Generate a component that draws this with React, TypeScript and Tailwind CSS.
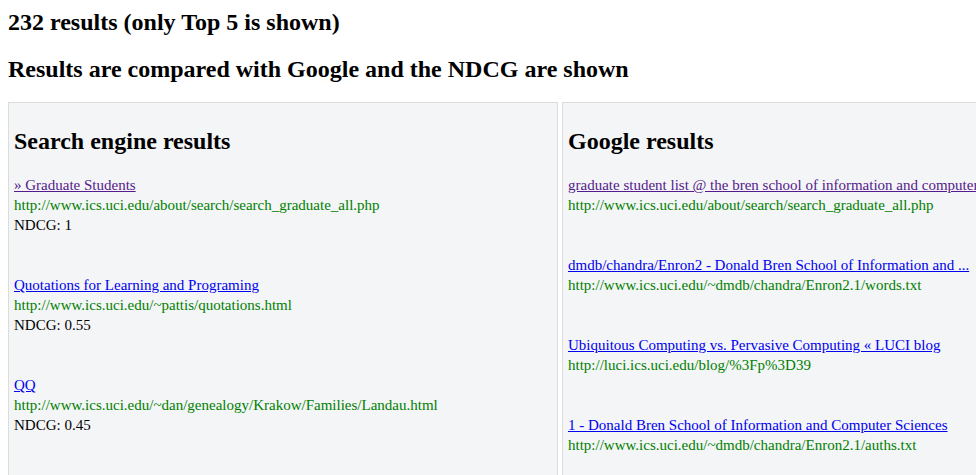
import React from 'react';

type Result = { title: string; href: string; url: string; ndcg?: string; visited?: boolean };

const ours: Result[] = [
  { title: '» Graduate Students', href: '#a', url: 'http://www.ics.uci.edu/about/search/search_graduate_all.php', ndcg: '1', visited: true },
  { title: 'Quotations for Learning and Programing', href: '#b', url: 'http://www.ics.uci.edu/~pattis/quotations.html', ndcg: '0.55' },
  { title: 'QQ', href: '#c', url: 'http://www.ics.uci.edu/~dan/genealogy/Krakow/Families/Landau.html', ndcg: '0.45' },
];

const google: Result[] = [
  { title: 'graduate student list @ the bren school of information and computer sciences', href: '#d', url: 'http://www.ics.uci.edu/about/search/search_graduate_all.php', visited: true },
  { title: 'dmdb/chandra/Enron2 - Donald Bren School of Information and ...', href: '#e', url: 'http://www.ics.uci.edu/~dmdb/chandra/Enron2.1/words.txt' },
  { title: 'Ubiquitous Computing vs. Pervasive Computing « LUCI blog', href: '#f', url: 'http://luci.ics.uci.edu/blog/%3Fp%3D39' },
  { title: '1 - Donald Bren School of Information and Computer Sciences', href: '#g', url: 'http://www.ics.uci.edu/~dmdb/chandra/Enron2.1/auths.txt' },
];

const Panel: React.FC<{ title: string; items: Result[] }> = ({ title, items }) => (
  <div className="w-[550px] shrink-0 overflow-hidden border border-[#dcdcdc] bg-[#f4f5f7] px-[5px] pb-4">
    <h3 className="mt-[24px] mb-[20px] text-[24px] font-bold leading-[28px]">{title}</h3>
    {items.map((r) => (
      <div key={r.href} className="mb-[40px] text-[15px] leading-[20px]">
        <a
          href={r.href}
          className={`block whitespace-nowrap underline ${r.visited ? 'text-[#551a8b]' : 'text-[#0000ee]'}`}
        >
          {r.title}
        </a>
        <div className="whitespace-nowrap text-[#008000]">{r.url}</div>
        {r.ndcg && <div>NDCG: {r.ndcg}</div>}
      </div>
    ))}
  </div>
);

export default function App() {
  return (
    <div className="h-[475px] overflow-hidden bg-white p-2 text-black" style={{ fontFamily: '"Liberation Serif", "Times New Roman", serif' }}>
      <h2 className="text-[24px] font-bold leading-[28px]">232 results (only Top 5 is shown)</h2>
      <h2 className="mt-[19px] text-[24px] font-bold leading-[28px]">Results are compared with Google and the NDCG are shown</h2>
      <div className="mt-[19px] flex gap-[4px]">
        <Panel title="Search engine results" items={ours} />
        <Panel title="Google results" items={google} />
      </div>
    </div>
  );
}
